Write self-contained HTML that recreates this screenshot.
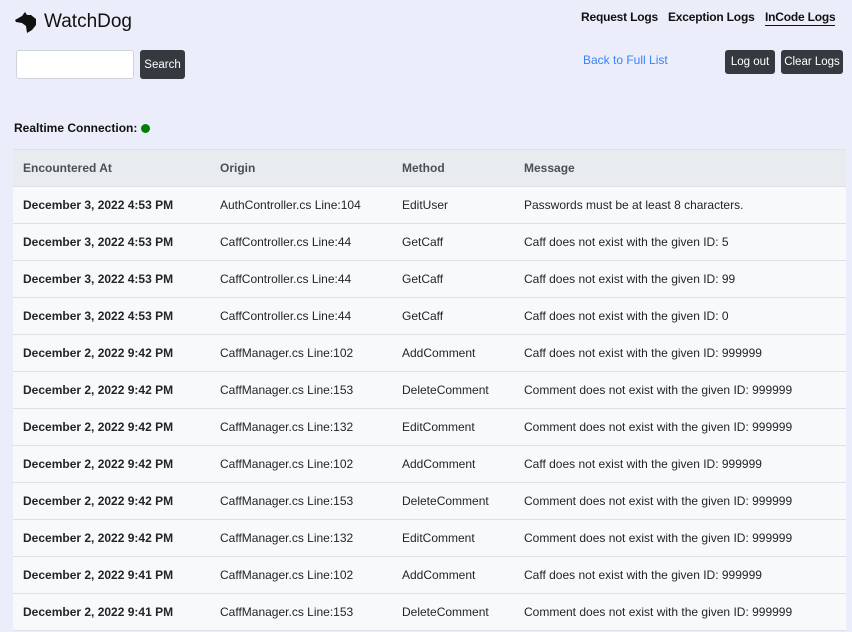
<!DOCTYPE html>
<html><head><style>
body{margin:0;background:#ebeefa;font-family:"Liberation Sans",sans-serif;width:852px;height:632px;overflow:hidden;position:relative;color:#212529}
.a{position:absolute}
.logo{left:14px;top:10px;font-size:19px;color:#111;display:flex;align-items:center;gap:6px}
.nav{top:10px;font-size:12px;font-weight:bold;color:#111;white-space:nowrap;letter-spacing:-0.2px}
.btn{background:#343a40;color:#fff;font-size:11.5px;border-radius:3px;display:flex;align-items:center;justify-content:center}
table{position:absolute;left:13px;top:149px;width:833px;border-collapse:collapse;font-size:12px}
th{background:#e9ecef;height:36px;text-align:left;color:#495057;font-weight:bold;padding:0 0 0 10px;border-top:1px solid #dee2e6;border-bottom:1px solid #dee2e6}
td{background:#f8f9fa;height:36px;padding:0 0 0 10px;border-bottom:1px solid #dee2e6}
td:first-child{font-weight:bold}
</style></head><body>
<div class="a logo"><svg width="24" height="24" viewBox="0 0 24 24"><path d="M1 10 L8 6 L11 2 L13 5 L17 5 L22 9 L22 15 L18 20 L13 23 L12 16 L8 13 L2 12 Z" fill="#111"/></svg>WatchDog</div>
<div class="a nav" style="left:581px">Request Logs</div>
<div class="a nav" style="left:668px">Exception Logs</div>
<div class="a nav" style="left:765px;border-bottom:1.5px solid #111;padding-bottom:1px">InCode Logs</div>
<div class="a" style="left:16px;top:50px;width:116px;height:27px;background:#fff;border:1px solid #ced4da;border-radius:3px"></div>
<div class="a btn" style="left:140px;top:50px;width:45px;height:29px">Search</div>
<div class="a" style="left:583px;top:53px;font-size:12px;color:#3b82f6">Back to Full List</div>
<div class="a btn" style="left:725px;top:50px;width:50px;height:24px">Log out</div>
<div class="a btn" style="left:781px;top:50px;width:62px;height:24px">Clear Logs</div>
<div class="a" style="left:14px;top:121px;font-size:12px;font-weight:bold;color:#111">Realtime Connection: <span style="display:inline-block;width:9px;height:9px;border-radius:50%;background:#008000;vertical-align:-1px"></span></div>
<table>
<tr><th style="width:187px">Encountered At</th><th style="width:172px">Origin</th><th style="width:112px">Method</th><th>Message</th></tr>
<tr><td>December 3, 2022 4:53 PM</td><td>AuthController.cs Line:104</td><td>EditUser</td><td>Passwords must be at least 8 characters.</td></tr>
<tr><td>December 3, 2022 4:53 PM</td><td>CaffController.cs Line:44</td><td>GetCaff</td><td>Caff does not exist with the given ID: 5</td></tr>
<tr><td>December 3, 2022 4:53 PM</td><td>CaffController.cs Line:44</td><td>GetCaff</td><td>Caff does not exist with the given ID: 99</td></tr>
<tr><td>December 3, 2022 4:53 PM</td><td>CaffController.cs Line:44</td><td>GetCaff</td><td>Caff does not exist with the given ID: 0</td></tr>
<tr><td>December 2, 2022 9:42 PM</td><td>CaffManager.cs Line:102</td><td>AddComment</td><td>Caff does not exist with the given ID: 999999</td></tr>
<tr><td>December 2, 2022 9:42 PM</td><td>CaffManager.cs Line:153</td><td>DeleteComment</td><td>Comment does not exist with the given ID: 999999</td></tr>
<tr><td>December 2, 2022 9:42 PM</td><td>CaffManager.cs Line:132</td><td>EditComment</td><td>Comment does not exist with the given ID: 999999</td></tr>
<tr><td>December 2, 2022 9:42 PM</td><td>CaffManager.cs Line:102</td><td>AddComment</td><td>Caff does not exist with the given ID: 999999</td></tr>
<tr><td>December 2, 2022 9:42 PM</td><td>CaffManager.cs Line:153</td><td>DeleteComment</td><td>Comment does not exist with the given ID: 999999</td></tr>
<tr><td>December 2, 2022 9:42 PM</td><td>CaffManager.cs Line:132</td><td>EditComment</td><td>Comment does not exist with the given ID: 999999</td></tr>
<tr><td>December 2, 2022 9:41 PM</td><td>CaffManager.cs Line:102</td><td>AddComment</td><td>Caff does not exist with the given ID: 999999</td></tr>
<tr><td>December 2, 2022 9:41 PM</td><td>CaffManager.cs Line:153</td><td>DeleteComment</td><td>Comment does not exist with the given ID: 999999</td></tr>
</table>
</body></html>
